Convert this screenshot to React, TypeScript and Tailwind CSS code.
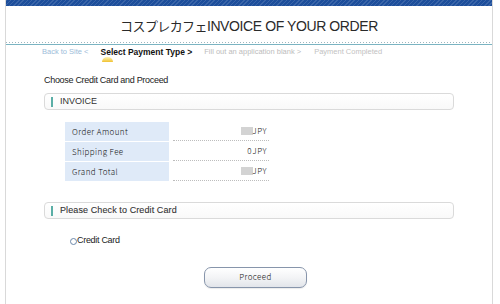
import React from "react";

const rows = [
  { label: "Order Amount", amount: null },
  { label: "Shipping Fee", amount: "0" },
  { label: "Grand Total", amount: null },
];

function SectionHeader({ title, className }: { title: string; className?: string }) {
  return (
    <div className="w-[410px] h-[17px] flex items-center rounded-[4px] border border-[#dadada] bg-[linear-gradient(#ffffff,#f9f9f9)] pl-[6px]">
      <span className="w-[2px] h-[10px] bg-[#5aaea6]" />
      <span className={"ml-[7px] text-[9px] leading-none text-[#333] " + (className || "")}>{title}</span>
    </div>
  );
}

export default function App() {
  return (
    <div className="w-[500px] h-[304px] bg-white overflow-hidden font-['Liberation_Sans',Arial,sans-serif]">
      <div className="ml-[5px] w-[488px] h-[304px] border-x border-[#d9d9d9]">
        <div className="h-[6px] bg-[#1d4e9b] bg-[repeating-linear-gradient(135deg,rgba(255,255,255,0.13)_0_1px,transparent_1px_3px)]" />

        <h1 className="h-[36px] pt-[4px] flex items-center justify-center text-[14px] tracking-[-0.4px] text-[#2a2a2a] font-normal">
          <span className="text-[13px] tracking-[-0.6px] font-['Noto_Sans_CJK_JP',sans-serif]">コスプレカフェ</span>
          <span>INVOICE OF YOUR ORDER</span>
        </h1>

        <div className="h-[1px] bg-[repeating-linear-gradient(90deg,#9db6bf_0_1px,transparent_1px_3px)]" />
        <div className="mt-[1px] h-[1px] bg-[#7ab4c2]" />

        <nav className="h-[14px] pl-[36px] flex items-center gap-[12px] text-[7.5px] leading-none whitespace-nowrap">
          <span className="text-[#9cbcd9]">Back to Site &lt;</span>
          <span className="relative h-[14px] flex items-center text-[8.5px] font-bold text-[#111]">
            Select Payment Type &gt;
            <span className="absolute left-[2px] top-[12px] w-[11px] h-[5px] rounded-t-full bg-[linear-gradient(#fff4b8,#f0c232)]" />
          </span>
          <span className="text-[#bcbcbc]">Fill out an application blank &gt;</span>
          <span className="ml-[1px] text-[#c2c2c2]">Payment Completed</span>
        </nav>

        <div className="pl-[38px]">
          <p className="mt-[16px] h-[12px] flex items-center text-[9px] tracking-[-0.3px] text-[#222]">
            Choose Credit Card and Proceed
          </p>

          <div className="mt-[6px]">
            <SectionHeader title="INVOICE" />
          </div>

          <div className="mt-[12px] ml-[21px] flex flex-col gap-[1px] font-['Noto_Sans_CJK_JP',sans-serif] font-light">
            {rows.map((r) => (
              <div key={r.label} className="flex gap-[4px] h-[19px]">
                <div className="w-[104px] bg-[#dfeaf8] pl-[7px] flex items-center text-[8px] tracking-[0.4px] text-[#111]">
                  {r.label}
                </div>
                <div className="w-[96px] border-b border-dotted border-[#bdbdbd] flex items-center justify-end pr-[2px] text-[8px] text-[#111]">
                  {r.amount === null ? (
                    <span className="w-[12px] h-[8px] bg-[#d3d3d3]" />
                  ) : (
                    <span className="mr-[1px]">{r.amount}</span>
                  )}
                  <span className="tracking-[0.5px]">JPY</span>
                </div>
              </div>
            ))}
          </div>

          <div className="mt-[21px]">
            <SectionHeader title="Please Check to Credit Card" className="text-[9.5px] tracking-[0.1px] text-[#333] [-webkit-text-stroke:0.1px_#333]" />
          </div>

          <label className="mt-[16px] ml-[26px] h-[12px] flex items-center text-[9px] tracking-[-0.3px] text-[#222]">
            <span className="w-[7px] h-[7px] rounded-full border border-[#6b88aa] bg-white" />
            <span>Credit Card</span>
          </label>

          <div className="mt-[16px] pl-[160px]">
            <button className="w-[103px] h-[21px] rounded-[7px] border border-[#8795ab] bg-[linear-gradient(#ffffff,#f3f4f6_50%,#e2e5ea)] shadow-[0_1px_1px_rgba(0,0,0,0.08)] font-['Noto_Sans_CJK_JP',sans-serif] font-light text-[8px] tracking-[0.4px] text-[#111]">
              Proceed
            </button>
          </div>
        </div>
      </div>
    </div>
  );
}
